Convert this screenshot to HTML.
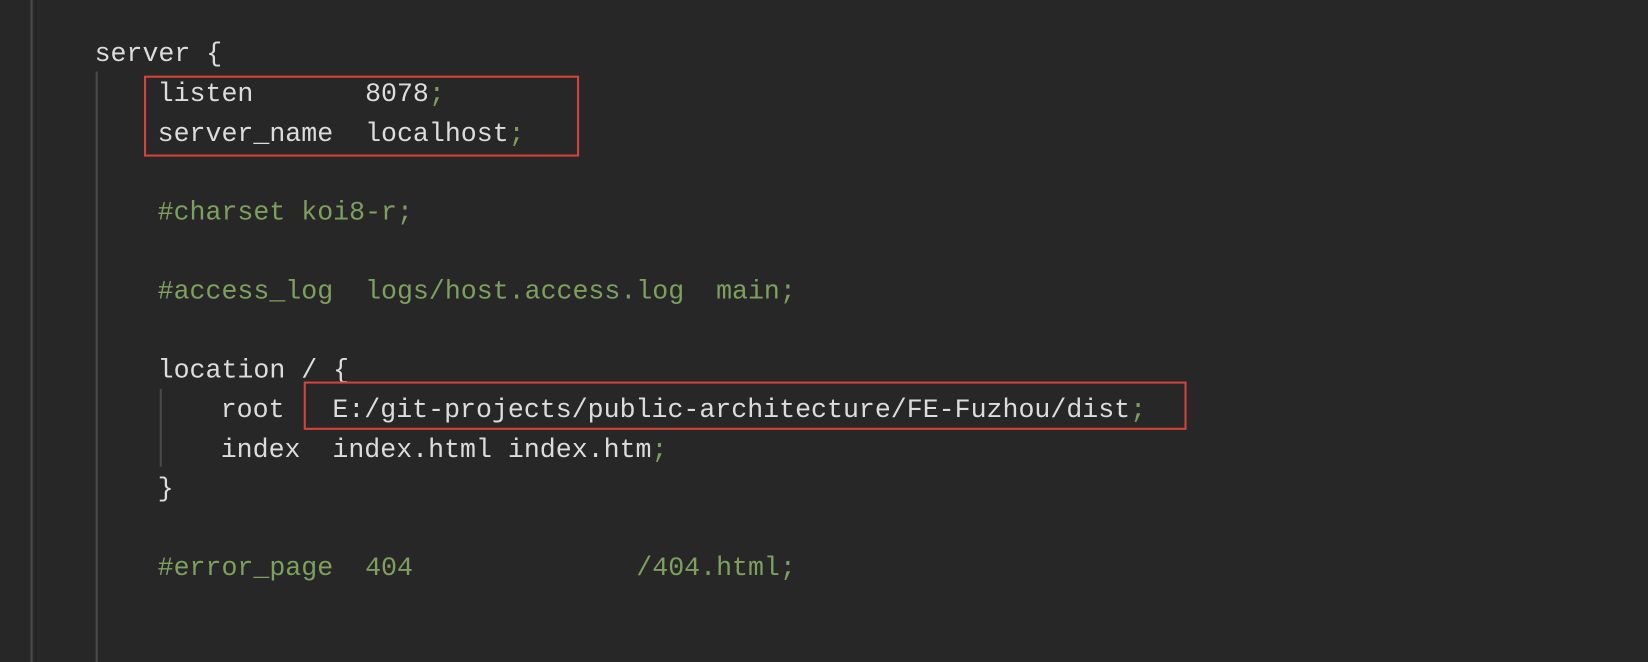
<!DOCTYPE html>
<html><head><style>
html,body{margin:0;padding:0;}
body{width:1648px;height:630px;background:#272727;position:relative;overflow:hidden;font-family:"Liberation Mono",monospace;font-size:25.3px;color:#dcdcdc;}
#w{position:absolute;left:0;top:0;width:1568px;height:600px;transform:scale(1.051);transform-origin:0 0;}
.l{position:absolute;white-space:pre;line-height:30px;}
.c{color:#7ea05e;}
.s{color:#7ea05e;}
.g{position:absolute;width:2px;background:#4a4a4a;}
.box{position:absolute;border:2px solid #d0443c;}
</style></head><body><div id="w">
<div class="g" style="left:29px;top:0;height:630px;"></div>
<div class="g" style="left:91px;top:68px;height:562px;"></div>
<div class="g" style="left:152px;top:370px;height:74px;"></div>
<div class="l" style="left:90px;top:37px;">server {</div>
<div class="l" style="left:150px;top:75px;">listen       8078<span class="s">;</span></div>
<div class="l" style="left:150px;top:113px;">server_name  localhost<span class="s">;</span></div>
<div class="l c" style="left:150px;top:188px;">#charset koi8-r;</div>
<div class="l c" style="left:150px;top:263px;">#access_log  logs/host.access.log  main;</div>
<div class="l" style="left:150px;top:338px;">location / {</div>
<div class="l" style="left:210px;top:376px;">root   E:/git-projects/public-architecture/FE-Fuzhou/dist<span class="s">;</span></div>
<div class="l" style="left:210px;top:414px;">index  index.html index.htm<span class="s">;</span></div>
<div class="l" style="left:150px;top:451px;">}</div>
<div class="l c" style="left:150px;top:526px;">#error_page  404              /404.html;</div>
<div class="box" style="left:137px;top:72px;width:410px;height:73px;"></div>
<div class="box" style="left:289px;top:363px;width:836px;height:42px;"></div>
</div></body></html>
